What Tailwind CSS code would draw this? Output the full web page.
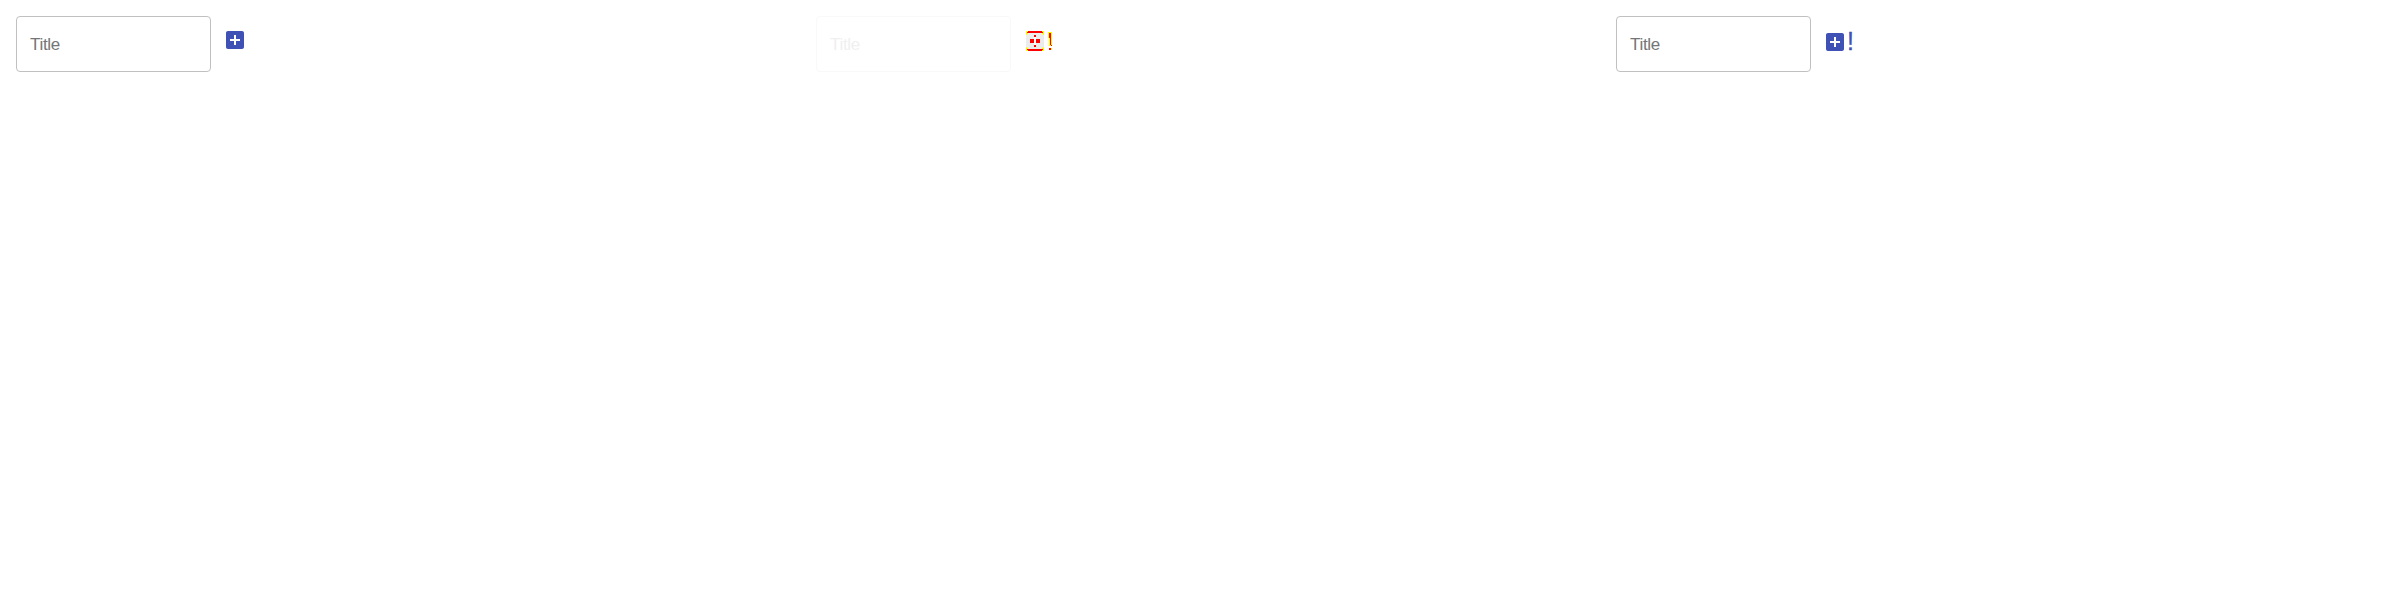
<!DOCTYPE html>
<html lang="en">
<head>
<meta charset="utf-8">
<title>Title field</title>
<script src="https://cdn.jsdelivr.net/npm/@tailwindcss/browser@4"></script>
</head>
<body class="bg-white font-['Liberation_Sans',sans-serif] antialiased">
<main class="grid h-[600px] w-[2400px] grid-cols-3">
  <section class="flex items-start pt-4 pl-4">
    <div class="flex h-14 w-[195px] items-center rounded border border-[#c0c0c0] pt-0.5 pl-[13px] text-[17px] leading-4 tracking-[-0.3px] text-[#757575]">Title</div>
    <svg class="mt-3 ml-3 size-6 fill-[#3f51b5]" viewBox="0 0 24 24"><path d="M19 3H5c-1.11 0-2 .9-2 2v14c0 1.1.89 2 2 2h14c1.1 0 2-.9 2-2V5c0-1.1-.9-2-2-2zm-2 10h-4v4h-2v-4H7v-2h4V7h2v4h4v2z"/></svg>
  </section>
  <section class="flex items-start pt-4 pl-4">
    <div class="flex h-14 w-[195px] items-center rounded border border-[#f9f9f9] pt-0.5 pl-[13px] text-[17px] leading-4 tracking-[-0.3px] text-[#f0f0f0]">Title</div>
    <svg class="mt-[15px] ml-[15px] h-5 w-[27px]" viewBox="0 0 27 20" shape-rendering="crispEdges">
      <path fill="#ececec" d="M0 2h18v16H0z"/>
      <path fill="#fff" d="M8 6h2v8H8z"/>
      <path fill="#ff0" d="M0 0h18v4h-1v-1h-1v-1H2v1H1v1H0zM0 20h18v-4h-1v1h-1v1H2v-1H1v-1H0zM22 1h4v14h-3V7h-1z"/>
      <path fill="#f00" d="M2 0h14v1h1v1H1V1h1zM1 18h16v1h-1v1H2v-1H1zM8 4h2v2H8zM4 8h4v4H4zM10 8h4v4h-4zM8 14h2v2H8zM23 2h2v12h-1V7h-1zM25 14h1v1h-1zM23 17h2v2h-2z"/>
      <path fill="#ff0" d="M25 17h1v2h-1z"/>
    </svg>
  </section>
  <section class="flex items-start pt-4 pl-4">
    <div class="flex h-14 w-[195px] items-center rounded border border-[#c0c0c0] pt-0.5 pl-[13px] text-[17px] leading-4 tracking-[-0.3px] text-[#757575]">Title</div>
    <div class="mt-[14px] ml-3 flex text-[#3f51b5]">
      <svg class="size-6 fill-[#3f51b5]" viewBox="0 0 24 24"><path d="M19 3H5c-1.11 0-2 .9-2 2v14c0 1.1.89 2 2 2h14c1.1 0 2-.9 2-2V5c0-1.1-.9-2-2-2zm-2 10h-4v4h-2v-4H7v-2h4V7h2v4h4v2z"/></svg>
      <span class="-mt-px text-[25px] leading-6 [-webkit-text-stroke:0.3px_#3f51b5]">!</span>
    </div>
  </section>
</main>
</body>
</html>
